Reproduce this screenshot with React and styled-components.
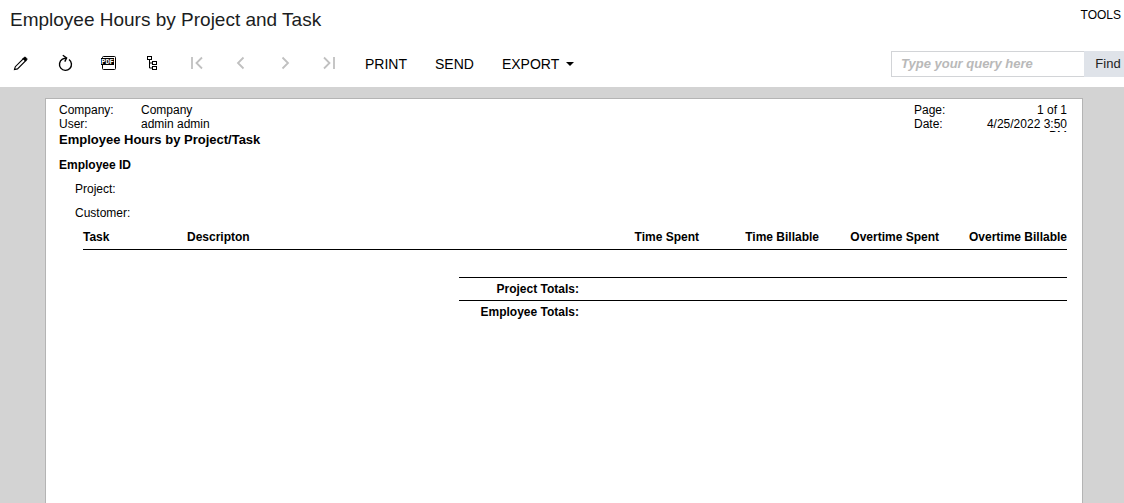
import React from "react";
import styled, { createGlobalStyle } from "styled-components";

const GlobalStyle = createGlobalStyle`
  * {
    box-sizing: border-box;
  }

  body {
    margin: 0;
    background: #fff;
    color: #000;
    font-family: "Liberation Sans", Arial, sans-serif;
    font-size: 12px;
    line-height: 14px;
  }
`;

const Screen = styled.div`
  display: flex;
  flex-direction: column;
  min-height: 100vh;
`;

const TitleBar = styled.header`
  display: flex;
  justify-content: space-between;
  align-items: flex-start;
  padding: 8px 3px 0 10px;
  height: 40px;
`;

const Title = styled.h1`
  margin: 0;
  font-size: 19px;
  font-weight: normal;
  line-height: 24px;
  color: #1b1d21;
`;

const PlainButton = styled.button`
  display: flex;
  align-items: center;
  padding: 0;
  border: none;
  background: none;
  color: #000;
  font-family: inherit;
  font-size: ${props => props.$size || "14px"};
  line-height: inherit;
  cursor: pointer;
`;

const Toolbar = styled.div`
  display: flex;
  align-items: center;
  height: 47px;
  padding-left: 11px;
`;

const IconGroup = styled.div`
  display: flex;
  gap: 24px;
`;

const IconButton = styled.button`
  width: 20px;
  height: 21px;
  padding: 0;
  border: none;
  background: none;
  color: #000;
  cursor: pointer;

  &:disabled {
    color: #c0c0c0;
    cursor: default;
  }
`;

const Icon = styled.svg`
  display: block;
  width: 20px;
  height: 21px;
  fill: none;
  stroke: currentColor;
`;

const TextGroup = styled.div`
  display: flex;
  gap: 28px;
  margin-left: 26px;
`;

const Caret = styled.span`
  margin-left: 7px;
  border: 4px solid transparent;
  border-top-color: #000;
  border-bottom: none;
`;

const Search = styled.form`
  display: flex;
  height: 26px;
  margin-left: auto;
`;

const SearchInput = styled.input`
  width: 193px;
  padding: 0 9px;
  border: 1px solid #d2d4d7;
  border-right: none;
  border-radius: 0;
  outline: none;
  font-family: inherit;
  font-size: 13px;

  &::placeholder {
    color: #b9b9b9;
    font-weight: bold;
    font-style: italic;
    opacity: 1;
  }
`;

const FindButton = styled.button`
  width: 40px;
  padding: 0 3px 0 11px;
  border: none;
  background: #dfe3e9;
  color: #222;
  font-family: inherit;
  font-size: 13px;
  cursor: pointer;
`;

const Viewer = styled.main`
  display: flex;
  flex: 1;
  padding: 11px 41px 0 45px;
  background: #d3d3d3;
`;

const Sheet = styled.section`
  flex: 1;
  padding: 4px 15px 0 13px;
  border: 1px solid #b4b4b4;
  border-bottom: none;
  background: #fff;
`;

const SheetHead = styled.div`
  display: flex;
  justify-content: space-between;
  align-items: flex-start;
  height: 55px;
`;

const Meta = styled.dl`
  display: grid;
  grid-template-columns: ${props => props.$columns};
  grid-auto-rows: 14px;
  margin: 0;

  dd {
    margin: 0;
  }
`;

const RightValue = styled.dd`
  text-align: right;
`;

// fixed-height field, the part that wraps is cut off
const DateValue = styled(RightValue)`
  height: 15px;
  padding-top: 1px;
  line-height: 12px;
  overflow: hidden;
`;

const ReportTitle = styled.h2`
  margin: 0;
  font-size: 13px;
  line-height: 17px;
`;

const Field = styled.div`
  margin-bottom: 10px;
  padding-left: ${props => (props.$indent ? "16px" : 0)};
  font-weight: ${props => (props.$bold ? "bold" : "normal")};
`;

const ReportTable = styled.table`
  width: calc(100% - 24px);
  margin-left: 24px;
  table-layout: fixed;
  border-spacing: 0;
`;

const Col = styled.col`
  width: ${props => props.$width};
`;

const HeadCell = styled.th`
  padding: 0 0 5px;
  border-bottom: 1px solid #000;
  text-align: ${props => props.$align || "right"};
  white-space: nowrap;
`;

const EmptyCell = styled.td`
  height: 27px;
  padding: 0;
`;

const TotalLabel = styled.th`
  padding: 4px 0;
  border-top: 1px solid #000;
  text-align: right;
`;

const TotalCell = styled.td`
  padding: 0;
  border-top: 1px solid #000;
`;

const BlankCell = styled.td`
  padding: 0;
`;

const icons = [
  {
    label: "Edit",
    art: (
      <>
        <path d="M3.5 16.5l.8-2.8 8.2-8.2 2.2 2.2-8.2 8.2z" strokeWidth="1.1" />
        <path d="M12 5.6l1.2-1.2q.8-.6 1.5 0l1 1q.6.7 0 1.5l-1.2 1.2z" fill="currentColor" />
      </>
    )
  },
  {
    label: "Refresh",
    art: (
      <>
        <path d="M14 6.5A6 6 0 1 1 7.4 6.2L11 5" strokeWidth="1.4" />
        <path d="M7.8 2.3L11.6 5 9.8 8.6" strokeWidth="1.4" />
      </>
    )
  },
  {
    label: "View PDF",
    art: (
      <>
        <rect x="3.5" y="3.5" width="13" height="13" rx="1" />
        <rect x="2" y="5" width="13" height="7" fill="currentColor" stroke="none" />
        <text
          x="8.5"
          y="11"
          fill="#fff"
          stroke="none"
          fontFamily="Liberation Mono, monospace"
          fontSize="7"
          fontWeight="bold"
          textAnchor="middle"
        >
          PDF
        </text>
      </>
    )
  },
  {
    label: "Groups",
    art: (
      <>
        <rect x="4.5" y="3.5" width="4" height="3" />
        <rect x="9.5" y="8.5" width="4" height="3" />
        <rect x="9.5" y="13.5" width="4" height="3" />
        <path d="M6.5 6.5v8.5h3M6.5 10h3" />
      </>
    )
  },
  {
    label: "First page",
    disabled: true,
    art: <path d="M5 4v12M15 4.5L9.5 10l5.5 5.5" strokeWidth="1.8" />
  },
  {
    label: "Previous page",
    disabled: true,
    art: <path d="M12.5 4.5L7 10l5.5 5.5" strokeWidth="1.8" />
  },
  {
    label: "Next page",
    disabled: true,
    art: <path d="M7.5 4.5L13 10l-5.5 5.5" strokeWidth="1.8" />
  },
  {
    label: "Last page",
    disabled: true,
    art: <path d="M5 4.5l5.5 5.5L5 15.5M15 4v12" strokeWidth="1.8" />
  }
];

const totals = ["Project Totals:", "Employee Totals:"];

const renderTotal = label => (
  <tr key={label}>
    <BlankCell colSpan={2} />
    <TotalLabel scope="row">{label}</TotalLabel>
    <TotalCell />
    <TotalCell />
    <TotalCell />
    <TotalCell />
  </tr>
);

const ReportToolbar = () => (
  <Toolbar>
    <IconGroup>
      {icons.map(({ label, disabled, art }) => (
        <IconButton key={label} type="button" aria-label={label} disabled={disabled}>
          <Icon viewBox="0 0 20 21">{art}</Icon>
        </IconButton>
      ))}
    </IconGroup>
    <TextGroup>
      <PlainButton type="button">PRINT</PlainButton>
      <PlainButton type="button">SEND</PlainButton>
      <PlainButton type="button" aria-haspopup="menu">
        EXPORT
        <Caret />
      </PlainButton>
    </TextGroup>
    <Search onSubmit={e => e.preventDefault()}>
      <SearchInput
        type="text"
        aria-label="Type your query here"
        placeholder="Type your query here"
      />
      <FindButton type="submit">Find</FindButton>
    </Search>
  </Toolbar>
);

const Report = () => (
  <Sheet>
    <SheetHead>
      <div>
        <Meta $columns="82px auto">
          <dt>Company:</dt>
          <dd>Company</dd>
          <dt>User:</dt>
          <dd>admin admin</dd>
        </Meta>
        <ReportTitle>Employee Hours by Project/Task</ReportTitle>
      </div>
      <Meta $columns="60px 93px">
        <dt>Page:</dt>
        <RightValue>1 of 1</RightValue>
        <dt>Date:</dt>
        <DateValue>4/25/2022 3:50 PM</DateValue>
      </Meta>
    </SheetHead>
    <Field $bold>Employee ID</Field>
    <Field $indent>Project:</Field>
    <Field $indent>Customer:</Field>
    <ReportTable>
      <colgroup>
        <Col $width="104px" />
        <Col />
        <Col $width="120px" />
        <Col $width="120px" />
        <Col $width="120px" />
        <Col $width="120px" />
        <Col $width="128px" />
      </colgroup>
      <thead>
        <tr>
          <HeadCell $align="left">Task</HeadCell>
          <HeadCell $align="left" colSpan={2}>
            Descripton
          </HeadCell>
          <HeadCell>Time Spent</HeadCell>
          <HeadCell>Time Billable</HeadCell>
          <HeadCell>Overtime Spent</HeadCell>
          <HeadCell>Overtime Billable</HeadCell>
        </tr>
      </thead>
      <tbody>
        <tr>
          <EmptyCell colSpan={7} />
        </tr>
        {totals.map(renderTotal)}
      </tbody>
    </ReportTable>
  </Sheet>
);

const App = () => (
  <Screen>
    <GlobalStyle />
    <TitleBar>
      <Title>Employee Hours by Project and Task</Title>
      <PlainButton type="button" $size="12px">
        TOOLS
      </PlainButton>
    </TitleBar>
    <ReportToolbar />
    <Viewer>
      <Report />
    </Viewer>
  </Screen>
);

export default App;
